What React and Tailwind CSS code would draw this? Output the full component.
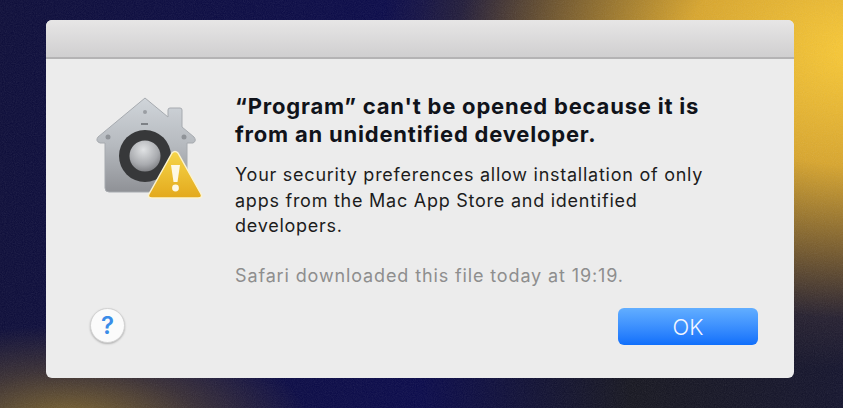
import React from 'react';

function SecurityIcon() {
  return (
    <svg width="108" height="104" viewBox="0 0 108 104" style={{ filter: 'blur(0.6px)' }}>
      <defs>
        <linearGradient id="house" x1="0" y1="0" x2="0" y2="1">
          <stop offset="0" stopColor="#d0d5da" />
          <stop offset="0.5" stopColor="#b6babf" />
          <stop offset="1" stopColor="#8f9196" />
        </linearGradient>
        <radialGradient id="knob" cx="0.45" cy="0.3" r="0.8">
          <stop offset="0" stopColor="#e0e2e4" />
          <stop offset="0.6" stopColor="#a9abaf" />
          <stop offset="1" stopColor="#6f7074" />
        </radialGradient>
        <linearGradient id="warn" x1="0" y1="0" x2="0" y2="1">
          <stop offset="0" stopColor="#f6d54a" />
          <stop offset="1" stopColor="#e3a91c" />
        </linearGradient>
      </defs>
      <path
        d="M50 2 L73 21 L73 14 Q73 12 75 12 L85 12 Q87 12 87 14 L87 31 L99 41 Q102 45 98 47 L92 47 L92 92 Q92 96 88 96 L14 96 Q10 96 10 92 L10 47 L5 47 Q0 45 3 41 Z"
        fill="url(#house)"
        stroke="#a6aaaf"
        strokeWidth="1"
      />
      <circle cx="13" cy="41" r="2.5" fill="#8f9398" />
      <circle cx="89" cy="41" r="2.5" fill="#8f9398" />
      <circle cx="50" cy="16" r="2" fill="#9a9ea3" />
      <rect x="46" y="27" width="7" height="2" fill="#7d8186" />
      <circle cx="50" cy="60" r="26" fill="#37383a" />
      <circle cx="50" cy="60" r="15.5" fill="url(#knob)" />
      <path
        d="M77 57 Q80 54 83 57 L106 98 Q108 102 103 102 L57 102 Q52 102 54 98 Z"
        fill="url(#warn)"
        stroke="#fbf3d0"
        strokeWidth="1.5"
        strokeLinejoin="round"
      />
      <path d="M76 69 L85 69 L82.5 86 L78.5 86 Z" fill="#fdf8e4" />
      <circle cx="80.5" cy="92" r="3.4" fill="#fdf8e4" />
    </svg>
  );
}

export default function App() {
  return (
    <div className="relative w-[843px] h-[408px] overflow-hidden pl-[46px] pt-[20px] font-['Inter',sans-serif] bg-[radial-gradient(ellipse_480px_320px_at_860px_50px,#fbcb36_0%,#d9a62d_36%,rgba(125,95,45,0.9)_64%,rgba(50,40,50,0.55)_84%,rgba(20,20,50,0)_100%),radial-gradient(ellipse_240px_100px_at_70px_425px,rgba(140,112,44,0.95)_0%,rgba(85,68,45,0.6)_55%,rgba(20,20,50,0)_100%),linear-gradient(90deg,#0b0b38_0%,#08084a_50%,#15151f_75%,#12122c_100%)]">
      {/* wallpaper grain */}
      <svg className="absolute inset-0 opacity-[0.12]" width="843" height="408">
        <filter id="grain">
          <feTurbulence type="fractalNoise" baseFrequency="0.9" numOctaves="2" />
          <feColorMatrix type="saturate" values="0" />
        </filter>
        <rect width="843" height="408" filter="url(#grain)" />
      </svg>

      <div className="relative w-[748px] h-[358px] rounded-[6px] overflow-hidden bg-[#ececec] flex flex-col">
        <div className="h-[39px] shrink-0 bg-gradient-to-b from-[#e7e6e6] to-[#d0cfd0] border-b-2 border-[#b4b3b4]"></div>

        <div className="flex flex-1 min-h-0">
          <div className="w-[189px] shrink-0 pl-[49px] pt-[37px]">
            <SecurityIcon />
          </div>
          <div className="flex-1 pt-[33px]">
            <h1 className="text-[22px] leading-[28px] font-bold tracking-[0.8px] text-[#10131a] whitespace-nowrap">
              “Program” can't be opened because it is
              <br />
              from an unidentified developer.
            </h1>
            <p className="mt-[14px] text-[18px] leading-[25.5px] tracking-[0.75px] text-[#1c1c1c] whitespace-nowrap">
              Your security preferences allow installation of only
              <br />
              apps from the Mac App Store and identified
              <br />
              developers.
            </p>
            <p className="mt-[25px] text-[18px] leading-[24px] tracking-[0.87px] text-[#8e8e8e] whitespace-nowrap">
              Safari downloaded this file today at 19:19.
            </p>
          </div>
        </div>

        <div className="flex items-start justify-between pl-[44px] pr-[36px] pb-[33px]">
          <button className="w-[35px] h-[35px] rounded-full bg-[#fbfbfb] border border-[#d2d2d2] shadow-[0_1px_2px_rgba(0,0,0,0.25)] text-[#3a8ce8] text-[24px] leading-none font-semibold flex items-center justify-center">
            ?
          </button>
          <button className="w-[140px] h-[37px] rounded-[6px] bg-gradient-to-b from-[#62aeff] to-[#0f6ffb] text-[#f2f6ff] text-[22px] leading-none font-light flex items-center justify-center">
            OK
          </button>
        </div>
      </div>
    </div>
  );
}
